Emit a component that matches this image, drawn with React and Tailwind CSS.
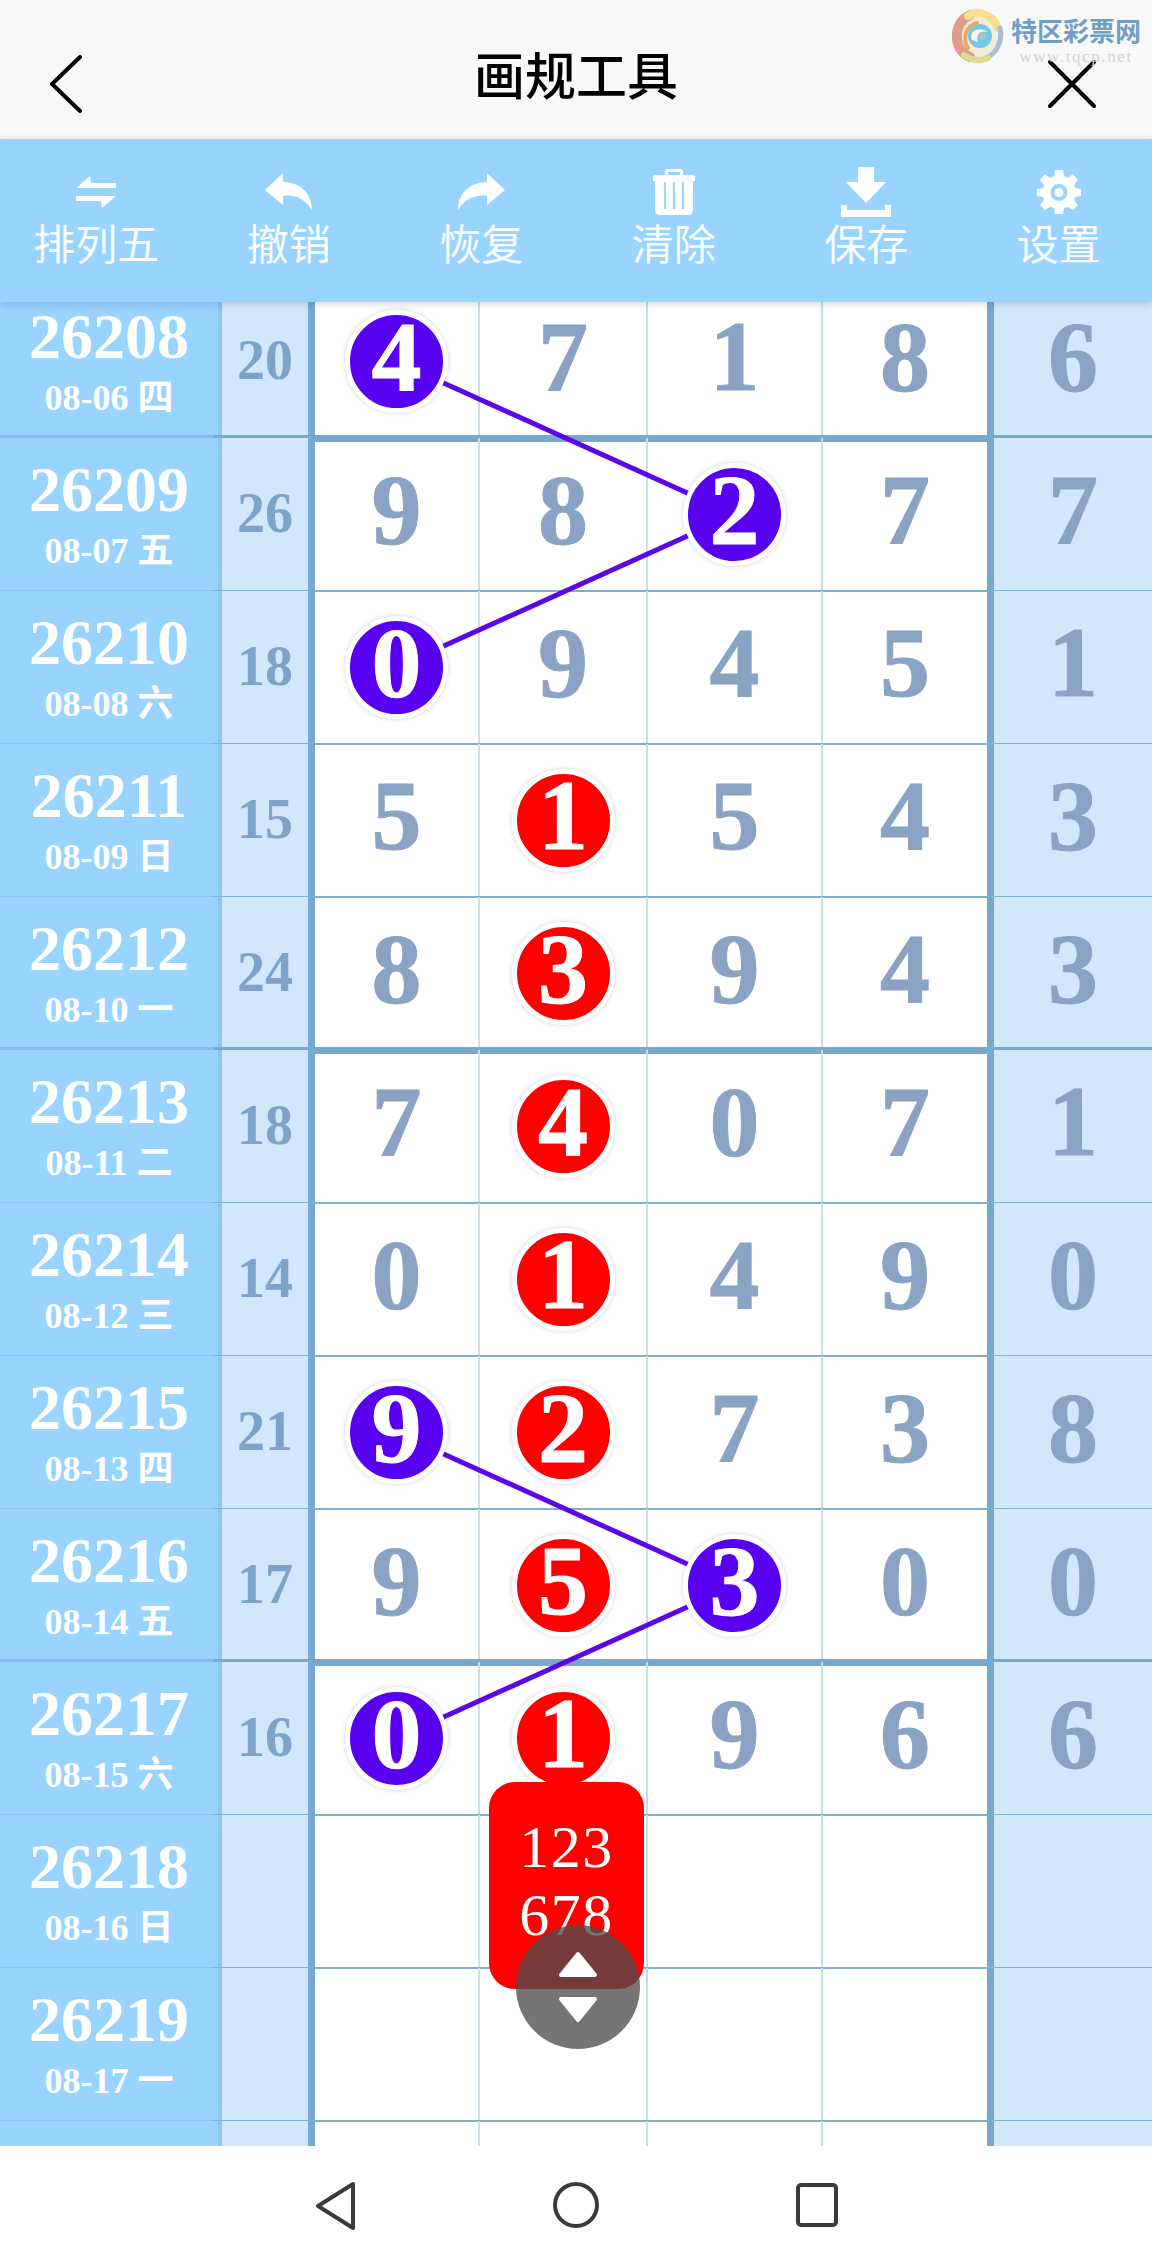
import React from "react";

const rows = [
  { no: "26208", date: "08-06 四", sum: "20", nums: [4, 7, 1, 8, 6], hits: { 0: "p" }, thick: true },
  { no: "26209", date: "08-07 五", sum: "26", nums: [9, 8, 2, 7, 7], hits: { 2: "p" } },
  { no: "26210", date: "08-08 六", sum: "18", nums: [0, 9, 4, 5, 1], hits: { 0: "p" } },
  { no: "26211", date: "08-09 日", sum: "15", nums: [5, 1, 5, 4, 3], hits: { 1: "r" } },
  { no: "26212", date: "08-10 一", sum: "24", nums: [8, 3, 9, 4, 3], hits: { 1: "r" }, thick: true },
  { no: "26213", date: "08-11 二", sum: "18", nums: [7, 4, 0, 7, 1], hits: { 1: "r" } },
  { no: "26214", date: "08-12 三", sum: "14", nums: [0, 1, 4, 9, 0], hits: { 1: "r" } },
  { no: "26215", date: "08-13 四", sum: "21", nums: [9, 2, 7, 3, 8], hits: { 0: "p", 1: "r" } },
  { no: "26216", date: "08-14 五", sum: "17", nums: [9, 5, 3, 0, 0], hits: { 1: "r", 2: "p" }, thick: true },
  { no: "26217", date: "08-15 六", sum: "16", nums: [0, 1, 9, 6, 6], hits: { 0: "p", 1: "r" } },
  { no: "26218", date: "08-16 日", sum: "", nums: [], hits: {} },
  { no: "26219", date: "08-17 一", sum: "", nums: [], hits: {} },
  { no: "", date: "", sum: "", nums: [], hits: {} },
];

const cellBorders = [
  "border-r-2 border-[#cfdfe8]",
  "border-r-2 border-[#c5dfea]",
  "border-r-2 border-[#c5dfea]",
  "border-r-[7px] border-[#75a9cf]",
  "bg-[#d2e7fb]",
];

function Cell({ value, hit, className }) {
  return (
    <div className={`relative flex items-center justify-center ${className}`}>
      {hit ? (
        <div
          className={`z-20 flex h-[103px] w-[103px] shrink-0 items-center justify-center rounded-full border-[5px] border-white pb-[9px] text-[100px] font-bold leading-none text-white shadow-[0_0_5px_rgba(0,0,0,0.18)] [-webkit-text-stroke:1px_currentColor] ${
            hit === "p" ? "bg-[#5800f0]" : "bg-[#ff0000]"
          }`}
        >
          {value}
        </div>
      ) : (
        <span className="pb-[9px] text-[100px] font-bold leading-none text-[#8aa3c4] [-webkit-text-stroke:1px_currentColor]">{value}</span>
      )}
    </div>
  );
}

function Row({ row }) {
  return (
    <div className="relative grid h-[153px] grid-cols-[222px_93px_165px_168px_175px_171px_158px]">
      <div className="flex flex-col items-center border-r-4 border-[#8cc6ee] bg-[#99d3ff] pt-[20px] text-white">
        <span className="text-[64px] font-bold leading-[64px]">{row.no}</span>
        <span className="h-[58px] text-[36px] font-bold leading-[58px]">{row.date}</span>
      </div>
      <div className="flex items-center justify-center border-r-[7px] border-[#75a9cf] bg-[#d2e7fb] pb-[3px] text-[56px] font-bold leading-none text-[#7fa3c8]">
        {row.sum}
      </div>
      {cellBorders.map((cls, i) => (
        <Cell key={i} value={row.nums[i]} hit={row.hits[i]} className={cls} />
      ))}
      {/* row separators sit on top of the column borders */}
      {row.thick ? (
        <>
          <div className="absolute bottom-[-4px] left-0 h-[7px] w-[214px] bg-[#86bde6]" />
          <div className="absolute bottom-[-4px] left-[214px] right-0 h-[7px] bg-[#75a9cf]" />
        </>
      ) : (
        <>
          <div className="absolute bottom-[-1px] left-0 h-[2px] w-[214px] bg-[#8cc6ee]" />
          <div className="absolute bottom-[-1px] left-[214px] right-0 h-[2px] bg-[#7fb0d0]" />
        </>
      )}
    </div>
  );
}

function Logo() {
  return (
    <svg width="54" height="56" viewBox="0 0 54 56" fill="none" className="shrink-0">
      <circle cx="27" cy="28" r="25" fill="#f4ecd6" />
      <path d="M20 49C2 42 3 14 20 7" stroke="#dd9d88" strokeWidth="10" strokeLinecap="round" />
      <path d="M18 8C30 1 44 8 48 20" stroke="#f5e08f" strokeWidth="8" strokeLinecap="round" />
      <path d="M50 20C53 34 46 46 36 50" stroke="#a8bdd6" strokeWidth="5" strokeLinecap="round" />
      <path d="M38 50C30 54 20 52 14 47" stroke="#d9dd8e" strokeWidth="6" strokeLinecap="round" />
      <path d="M18 40C12 30 16 18 27 15" stroke="#e9a866" strokeWidth="4" strokeLinecap="round" />
      <circle cx="30" cy="28" r="12" fill="#74c5e6" />
      <path d="M22 32C18 22 30 18 38 24C30 22 26 26 28 34Z" fill="#f8f4e6" />
      <circle cx="32" cy="28" r="4" fill="#a6c2cc" />
    </svg>
  );
}

function ToolItem({ icon, label }) {
  return (
    <div className="flex w-[192.5px] shrink-0 flex-col items-center">
      <div className="flex h-[64px] w-full items-center justify-center">{icon}</div>
      <span className="mt-[-3px] font-['Noto_Sans_CJK_SC',sans-serif] text-[42px] leading-[42px] text-white/95">{label}</span>
    </div>
  );
}

const tools = [
  {
    label: "排列五",
    icon: (
      <svg width="42" height="32" viewBox="0 0 42 32" fill="white">
        <path d="M15 0L1 12H41V7H16Z" />
        <path d="M1 20H41L27 32L26 25H1Z" />
      </svg>
    ),
  },
  {
    label: "撤销",
    icon: (
      <svg width="48" height="38" viewBox="0 0 48 38" fill="white">
        <path d="M18 0L0 17L18 32V23C30 21 40 26 47 37C47 21 36 9 18 9Z" />
      </svg>
    ),
  },
  {
    label: "恢复",
    icon: (
      <svg width="48" height="38" viewBox="0 0 48 38" fill="white">
        <path d="M30 0L48 17L30 32V23C18 21 8 26 1 37C1 21 12 9 30 9Z" />
      </svg>
    ),
  },
  {
    label: "清除",
    icon: (
      <svg width="42" height="46" viewBox="0 0 42 46" fill="white">
        <path d="M12 6V2.5C12 1 13 0 14.5 0H27.5C29 0 30 1 30 2.5V6H40C41 6 42 7 42 8V12H40V41C40 44 38 46 35 46H7C4 46 2 44 2 41V12H0V8C0 7 1 6 2 6ZM15 3V6H27V3ZM11 13V40H13V13ZM20 13V40H22V13ZM29 13V40H31V13Z" fillRule="evenodd" />
      </svg>
    ),
  },
  {
    label: "保存",
    icon: (
      <svg width="50" height="50" viewBox="0 0 50 50" fill="white">
        <path d="M17 0H33V15H45L25 36L5 15H17Z" />
        <path d="M0 38H6V43H44V38H50V50H0Z" />
      </svg>
    ),
  },
  {
    label: "设置",
    icon: (
      <svg width="44" height="44" viewBox="0 0 44 44" fill="white">
        <path
          fillRule="evenodd"
          d="M18 0H26L27 6L31 8L36 4L41 10L37 15L38 18L44 19V26L38 27L37 30L41 35L36 40L31 37L27 38L26 44H18L17 38L13 37L8 40L3 35L7 30L6 27L0 26V19L6 18L7 15L3 10L8 4L13 8L17 6ZM22 14A8.5 8.5 0 1 0 22 31A8.5 8.5 0 1 0 22 14ZM22 18A4.5 4.5 0 1 1 22 27A4.5 4.5 0 1 1 22 18Z"
        />
      </svg>
    ),
  },
];

export default function App() {
  return (
    <div className="relative flex h-[2263px] w-[1152px] flex-col overflow-hidden bg-white font-['Liberation_Serif','Noto_Sans_CJK_SC',serif]">
      {/* title bar */}
      <header className="relative grid h-[139px] shrink-0 grid-cols-[1fr_auto_1fr] items-center bg-[#f8f8f8] pl-[49px] pr-[55px]">
        <svg width="34" height="58" viewBox="0 0 34 58" className="mt-[28px]" fill="none" stroke="black" strokeWidth="4" strokeLinecap="round" strokeLinejoin="round">
          <path d="M31 2L3 29L31 56" />
        </svg>
        <h1 className="ml-[6px] mt-[8px] font-['Noto_Sans_CJK_SC',sans-serif] text-[51px] font-medium leading-none text-black">画规工具</h1>
        <svg width="50" height="50" viewBox="0 0 50 50" className="mt-[28px] justify-self-end" fill="none" stroke="black" strokeWidth="4" strokeLinecap="round">
          <path d="M3 3L47 47M47 3L3 47" />
        </svg>
        {/* watermark logo */}
        <div className="absolute left-[950px] top-[8px] flex items-start gap-[6px]">
          <Logo />
          <div className="flex w-[132px] flex-col items-center pt-[8px]">
            <span className="whitespace-nowrap font-['Noto_Sans_CJK_SC',sans-serif] text-[26px] font-bold leading-[28px] text-[#6f9fc2]">特区彩票网</span>
            <span className="mt-[4px] whitespace-nowrap text-[17px] leading-[18px] tracking-[1.6px] text-[#d4d4d4]">www.tqcp.net</span>
          </div>
        </div>
      </header>

      {/* toolbar */}
      <div className="relative z-40 flex h-[163px] shrink-0 bg-[#99d3ff] pt-[21px] shadow-[0_2px_8px_rgba(0,0,0,0.16)]">
        {tools.map((t) => (
          <ToolItem key={t.label} icon={t.icon} label={t.label} />
        ))}
      </div>

      {/* chart */}
      <main className="relative min-h-0 flex-1 overflow-hidden">
        <div className="relative mt-[-17px]">
          {rows.map((row, i) => (
            <Row key={i} row={row} />
          ))}
          <svg className="absolute left-0 top-0 z-10 h-[1989px] w-[1152px]" viewBox="0 0 1152 1989" fill="none" stroke="#5a08e6" strokeWidth="5">
            <path d="M396 76.5L735 229.5L396 382.5" />
            <path d="M396 1147.5L735 1300.5L396 1453.5" />
          </svg>
        </div>
      </main>

      {/* android nav */}
      <nav className="flex h-[117px] shrink-0 bg-white pt-[36px]">
        <svg width="1152" height="48" viewBox="0 0 1152 48" fill="none" stroke="#3a3a3a" strokeWidth="4" strokeLinejoin="round">
          <path d="M353 2L318 24L353 46Z" />
          <circle cx="576" cy="23" r="21" />
          <rect x="798" y="3" width="38" height="40" rx="3" />
        </svg>
      </nav>

      {/* popup with the picked numbers */}
      <div className="absolute left-[489px] top-[1782px] z-30 flex h-[207px] w-[155px] flex-col items-center rounded-[26px] bg-[#ff0000] pt-[31px] text-[60px] leading-[68px] tracking-[1.5px] text-white">
        <span>123</span>
        <span>678</span>
      </div>

      {/* scroll handle */}
      <div className="absolute left-[516px] top-[1925px] z-30 flex h-[124px] w-[124px] flex-col items-center justify-center gap-[18px] rounded-full bg-[rgba(75,75,75,0.77)]">
        <svg width="40" height="27" viewBox="0 0 40 27" fill="white" stroke="white" strokeWidth="4" strokeLinejoin="round">
          <path d="M20 3L37 24H3Z" />
        </svg>
        <svg width="40" height="27" viewBox="0 0 40 27" fill="white" stroke="white" strokeWidth="4" strokeLinejoin="round">
          <path d="M20 24L37 3H3Z" />
        </svg>
      </div>
    </div>
  );
}
